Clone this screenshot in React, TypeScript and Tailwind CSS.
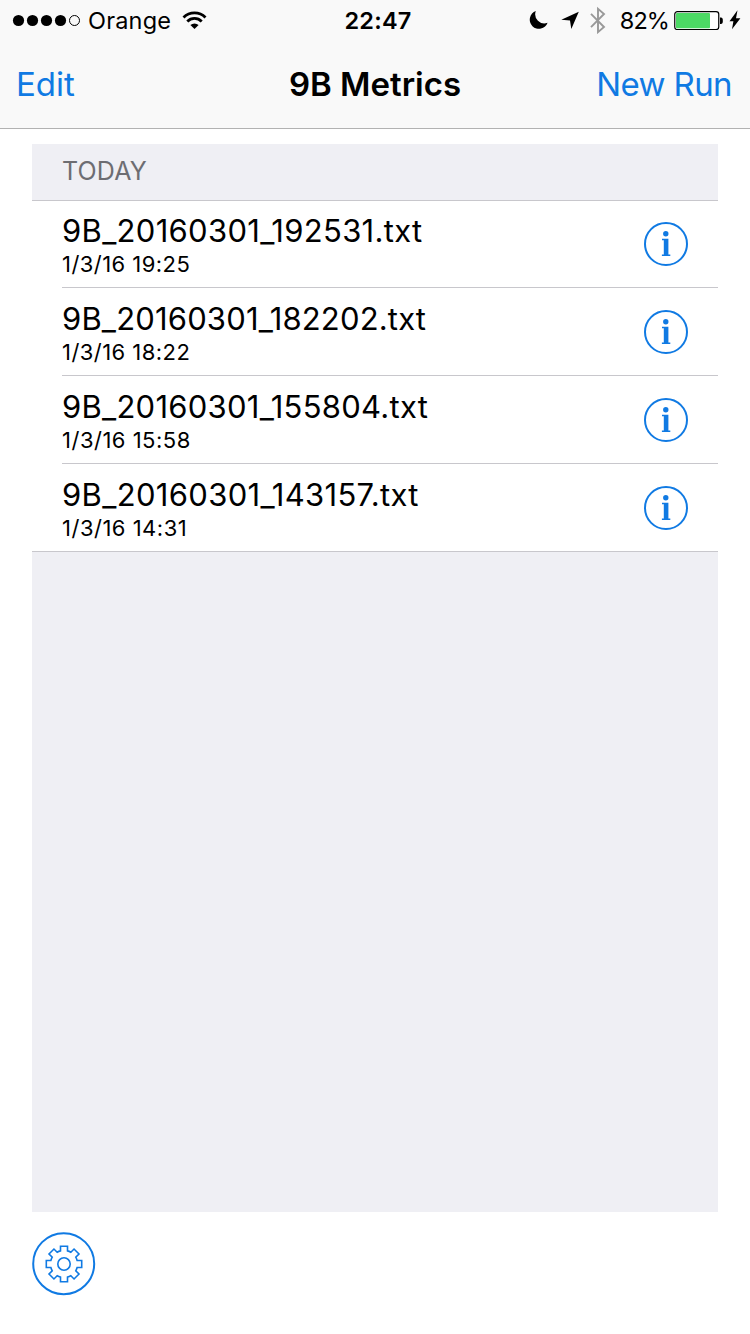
import React from "react";

const runs = [
  { name: "9B_20160301_192531.txt", date: "1/3/16 19:25", nameSpacing: "tracking-[0.31px]", dateSpacing: "tracking-[0.45px]" },
  { name: "9B_20160301_182202.txt", date: "1/3/16 18:22", nameSpacing: "tracking-[0.17px]", dateSpacing: "tracking-[0.45px]" },
  { name: "9B_20160301_155804.txt", date: "1/3/16 15:58", nameSpacing: "tracking-[0.26px]", dateSpacing: "tracking-[0.5px]" },
  { name: "9B_20160301_143157.txt", date: "1/3/16 14:31", nameSpacing: "tracking-[0.34px]", dateSpacing: "tracking-[0.5px]" },
];

/** Outline of an eight-toothed cog centred on the origin. */
function gearPath(outer: number, body: number, half: number): string {
  const parts: string[] = [];
  const inset = Math.sqrt(body * body - half * half);
  for (let i = 0; i < 8; i++) {
    const a = (i * Math.PI) / 4;
    const p = (x: number, y: number) =>
      `${(x * Math.cos(a) - y * Math.sin(a)).toFixed(2)} ${(x * Math.sin(a) + y * Math.cos(a)).toFixed(2)}`;
    parts.push(
      i === 0 ? `M${p(-half, -inset)}` : `A${body} ${body} 0 0 1 ${p(-half, -inset)}`,
      `L${p(-half, -outer)}`,
      `L${p(half, -outer)}`,
      `L${p(half, -inset)}`,
    );
  }
  parts.push(`A${body} ${body} 0 0 1 ${-half} ${(-inset).toFixed(2)}Z`);
  return parts.join("");
}

function StatusBar() {
  return (
    <div className="grid h-10 grid-cols-3 items-center text-[23.5px] leading-[38px]">
      <div className="flex h-10 items-center pl-3">
        <svg className="mr-[7px] h-4 w-[69px] shrink-0" viewBox="0 0 69 16">
          <circle cx="6.5" cy="8.5" r="5.6" />
          <circle cx="20.5" cy="8.5" r="5.6" />
          <circle cx="34.5" cy="8.5" r="5.6" />
          <circle cx="48.5" cy="8.5" r="5.6" />
          <circle cx="62.5" cy="8.5" r="5" fill="none" stroke="#000" strokeWidth="1" />
        </svg>
        <span className="pt-[2px] tracking-[0.2px]">Orange</span>
        <svg className="ml-[11px] h-[18px] w-[25px] shrink-0" viewBox="-.5 0 25 18">
          <g fill="none" stroke="#000" strokeWidth="2.8">
            <path d="M1 6.4a15.6 15.6 0 0 1 22 0" />
            <path d="M4.8 10.400a10.2 10.2 0 0 1 14.4 0" />
          </g>
          <path d="M7.9 14a6.1 6.1 0 0 1 8.2 0L12 18z" />
        </svg>
      </div>
      <div className="pl-[6px] pt-[2px] text-center font-semibold tracking-[0.2px]">22:47</div>
      <div className="flex h-10 items-center justify-end pr-[9px]">
        <svg className="mr-3 h-5 w-5 shrink-0" viewBox="0 0 20 20">
          <path d="M6.800 1A9.2 9.2 0 1 0 18.6 12.8A9.2 9.2 0 0 1 6.800 1Z" />
        </svg>
        <svg className="mr-[11px] h-[18px] w-[18px] shrink-0" viewBox="0 -.5 18 18">
          <path d="M17.8.3 10.3 17.5 9 9 .3 8.2z" />
        </svg>
        <svg className="mr-[14px] h-7 w-4 shrink-0" viewBox="0 -.5 16 28" fill="none" stroke="#999" strokeWidth="1.9">
          <path d="M1 7.300 14 20.5 8 25.6V2.4L14 7.5 1 20.7" />
        </svg>
        <span className="pt-[2px] tracking-[-0.9px]">82%</span>
        <svg className="ml-[5px] h-5 w-[50px] shrink-0" viewBox="0 0 50 20">
          <rect x=".75" y="1.600" width="44" height="18" rx="2.7" fill="#fff" stroke="#000" strokeWidth="1.2" />
          <rect x="2" y="3" width="34" height="15.200" rx="1" fill="#4cd964" />
          <path d="M46 7.500h1.2a2 2 0 0 1 1.6 2v2.500a2 2 0 0 1-1.600 2H46z" />
        </svg>
        <svg className="ml-[5px] h-5 w-3 shrink-0" viewBox="0 0 12 20">
          <path d="M8.500.300.500 11.200h3.900L3 19.200l8.400-11H7z" />
        </svg>
      </div>
    </div>
  );
}

function InfoIcon() {
  return (
    <svg className="h-11 w-11 shrink-0" viewBox="0 0 44 44" fill="#107ae3">
      <circle cx="22" cy="22" r="21" fill="none" stroke="#107ae3" strokeWidth="2" />
      <circle cx="21.800" cy="11.700" r="2.700" />
      <path d="M18 16.800h6.400v15.800H26.300V34H17.900v-1.400h1.900V18.200H18z" />
    </svg>
  );
}

export default function App() {
  return (
    <div className="flex h-[1334px] w-[750px] flex-col overflow-hidden bg-white font-['Inter','Liberation_Sans',sans-serif] text-black">
      <header className="h-[129px] shrink-0 border-b border-[#b2b2b2] bg-[#f9f9f9]">
        <StatusBar />
        <div className="grid h-[88px] grid-cols-3 items-center text-[33px] leading-[88px]">
          <span className="pl-4 text-[#107ae3]">Edit</span>
          <span className="text-center font-semibold">9B Metrics</span>
          <span className="pr-[18px] text-right tracking-[-0.6px] text-[#107ae3]">New Run</span>
        </div>
      </header>
      <main className="mx-8 mt-[15px] h-[1068px] shrink-0 bg-[#efeff4]">
        <h2 className="h-[57px] border-b border-[#c8c7cc] pl-[30px] text-[25px] leading-[54px] tracking-[0.15px] text-[#6d6d72]">TODAY</h2>
        <ul className="border-b border-[#c8c7cc] bg-white pl-[30px]">
          {runs.map((run, i) => (
            <li
              key={run.name}
              className={`flex items-end justify-between pr-[30px] ${i === 0 || i === runs.length - 1 ? "h-[87px]" : "h-[88px]"} ${i < runs.length - 1 ? "border-b border-[#c8c7cc]" : ""}`}
            >
              <div className="pb-[9px]">
                <div className={`pb-px text-[31px] leading-[37px] ${run.nameSpacing}`}>{run.name}</div>
                <div className={`text-[22px] leading-[28px] ${run.dateSpacing}`}>{run.date}</div>
              </div>
              <div className="pb-[21px]">
                <InfoIcon />
              </div>
            </li>
          ))}
        </ul>
      </main>
      <footer className="pl-8 pt-5">
        <svg className="h-16 w-16" viewBox="-32 -32 64 64" fill="none" stroke="#107ae3">
          <circle cx="-.3" cy="-.3" r="30.500" strokeWidth="2" />
          <path d={gearPath(17.7, 13.6, 3.5)} strokeWidth="1.6" />
          <circle r="6.200" strokeWidth="1.6" />
        </svg>
      </footer>
    </div>
  );
}
